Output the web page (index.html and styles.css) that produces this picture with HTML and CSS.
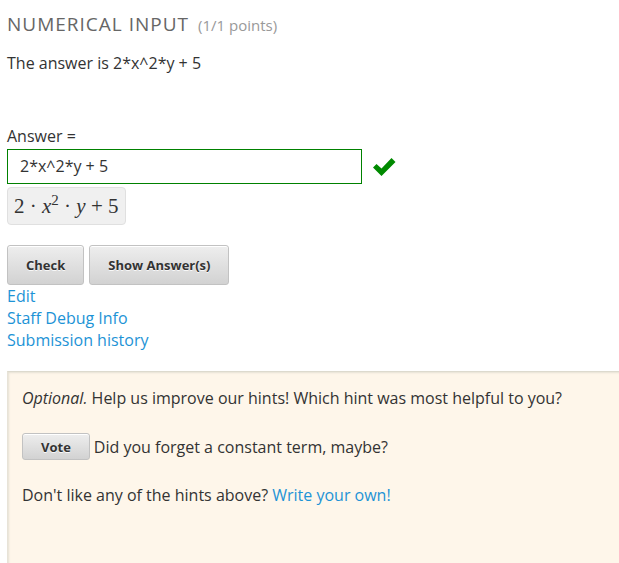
FILE: index.html
```html
<!DOCTYPE html>
<html lang="en">
<head>
<meta charset="utf-8">
<title>Numerical Input</title>
<link rel="stylesheet" href="styles.css">
</head>
<body>
<main class="problem">
  <header class="problem-header">
    <h1 class="problem-title">Numerical Input</h1>
    <span class="problem-points">(1/1 points)</span>
  </header>
  <p class="prompt">The answer is 2*x^2*y + 5</p>
  <form class="answer-form">
    <label class="answer-label" for="answer">Answer =</label>
    <div class="answer-row">
      <input class="answer-input" id="answer" type="text" value="2*x^2*y + 5">
      <svg class="status-icon" viewBox="0 0 24 20" role="img" aria-label="correct"><path d="M1 10.500 4.500 7 9.500 11.500 19.500 1 23.500 5 9.500 19Z"/></svg>
    </div>
    <div class="preview">2 · <i>x</i><sup>2</sup> · <i>y</i> + 5</div>
    <div class="actions">
      <button class="button" type="button">Check</button>
      <button class="button" type="button">Show Answer(s)</button>
    </div>
  </form>
  <nav class="links">
    <a href="#edit">Edit</a>
    <a href="#debug">Staff Debug Info</a>
    <a href="#history">Submission history</a>
  </nav>
  <section class="hints">
    <p><em>Optional.</em> Help us improve our hints! Which hint was most helpful to you?</p>
    <div class="hint">
      <button class="button button-small" type="button">Vote</button>
      <span>Did you forget a constant term, maybe?</span>
    </div>
    <p>Don't like any of the hints above? <a href="#write">Write your own!</a></p>
  </section>
</main>
</body>
</html>
```
FILE: styles.css
```css
* {
  box-sizing: border-box;
}

html,
body {
  min-height: 100vh;
}

body {
  display: flex;
  margin: 0;
  background: #fff;
  color: #333;
  font: 16px/22px "Open Sans", sans-serif;
}

p {
  margin: 0;
}

a {
  color: #1d93d6;
  text-decoration: none;
}

.problem {
  display: flex;
  flex: 1;
  flex-direction: column;
  padding: 12px 0 0 7px;
}

.problem-header {
  display: flex;
  align-items: baseline;
  gap: 9px;
  line-height: 24px;
}

.problem-title {
  margin: 0;
  color: #666;
  font-size: 19px;
  font-weight: 400;
  letter-spacing: 1px;
  text-transform: uppercase;
}

.problem-points {
  color: #999;
  font-size: 15px;
}

.prompt {
  margin-top: 15px;
}

.answer-form {
  display: flex;
  flex-direction: column;
  align-items: flex-start;
  margin-top: 51px;
}

.answer-row {
  display: flex;
  align-items: center;
  gap: 10px;
  width: 100%;
  margin-top: 2px;
}

.answer-input {
  width: 58%;
  height: 35px;
  padding: 0 12px 2px;
  border: 1px solid #008100;
  border-radius: 0;
  background: #fff;
  color: #333;
  font: inherit;
}

.status-icon {
  width: 24px;
  height: 20px;
  fill: #008a00;
}

.preview {
  margin-top: 3px;
  padding: 0 6px;
  border: 1px solid #e0e0e0;
  border-radius: 4px;
  background: #f0f0f0;
  font: 21px/36px "Liberation Serif", serif;
}

.preview sup {
  font-size: 15px;
  line-height: 0;
}

.actions {
  display: flex;
  gap: 5px;
  margin-top: 20px;
}

.button {
  height: 40px;
  padding: 0 18px;
  border: 1px solid #c2c2c2;
  border-radius: 3px;
  background: linear-gradient(#eee, #d2d2d2);
  box-shadow: inset 0 1px 0 #fff;
  color: #333;
  font: 700 13px/20px "Open Sans", sans-serif;
  text-shadow: 0 1px 0 #f8f8f8;
}

.button-small {
  height: 27px;
}

.links {
  display: flex;
  flex-direction: column;
  align-items: flex-start;
}

.hints {
  display: flex;
  flex: 1;
  flex-direction: column;
  gap: 24px;
  margin-top: 20px;
  padding: 15px 14px;
  background: #fef6ea;
  border-top: 1px solid #dddace;
  border-left: 1px solid #e8e3d8;
  box-shadow: inset 2px 2px 2px -1px #e6e1d5;
}

.hint {
  display: flex;
  align-items: center;
  gap: 4px;
}
```
